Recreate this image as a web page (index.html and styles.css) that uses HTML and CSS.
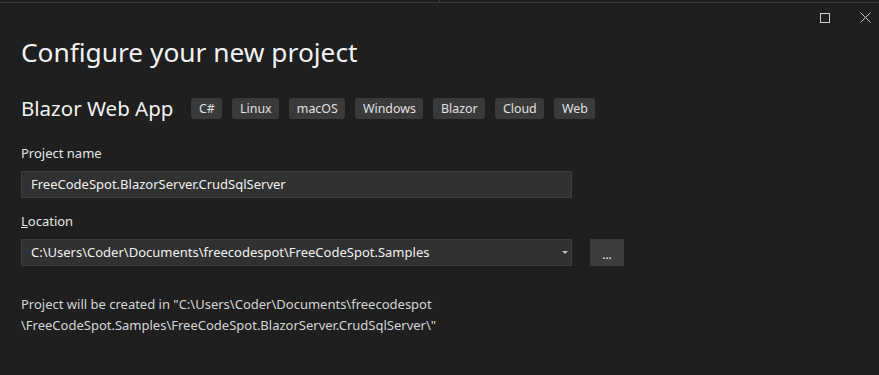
FILE: index.html
```html
<!DOCTYPE HTML>
<html>
<head>
    <meta charset="UTF-8">
    <title>Configure your new project</title>
    <link rel="stylesheet" href="styles.css">
</head>
<body>
    <div id="dialog">
        <div class="topline"><span class="split"></span></div>
        <div class="caption">
            <span class="btn-max"></span>
            <span class="btn-close">
                <svg width="11" height="11" viewBox="0 0 11 11"><path d="M0.5 0.5 L10.5 10.5 M10.5 0.5 L0.5 10.5" stroke="#c8c8c8" stroke-width="1" fill="none"/></svg>
            </span>
        </div>
        <h1 class="title">Configure your new project</h1>
        <div class="template">
            <h2 class="name">Blazor Web App</h2>
            <ul class="tags">
                <li>C#</li>
                <li>Linux</li>
                <li>macOS</li>
                <li>Windows</li>
                <li>Blazor</li>
                <li>Cloud</li>
                <li>Web</li>
            </ul>
        </div>
        <div class="field first">
            <label class="label">Project name</label>
            <div class="input">FreeCodeSpot.BlazorServer.CrudSqlServer</div>
        </div>
        <div class="field">
            <label class="label"><u>L</u>ocation</label>
            <div class="row">
                <div class="input combo">
                    <span>C:\Users\Coder\Documents\freecodespot\FreeCodeSpot.Samples</span>
                    <i class="arrow"></i>
                </div>
                <div class="browse">...</div>
            </div>
        </div>
        <p class="note">Project will be created in "C:\Users\Coder\Documents\freecodespot<br>\FreeCodeSpot.Samples\FreeCodeSpot.BlazorServer.CrudSqlServer\"</p>
    </div>
</body>
</html>
```

FILE: styles.css
```css
body{margin:0;background:#1f1f1f;font-family:"Noto Sans","Open Sans",sans-serif;color:#e6e6e6;}
h1,h2,p,ul,li{margin:0;padding:0;list-style:none;}

#dialog{
    position: relative;
    width: 879px;
    height: 375px;
    overflow: hidden;
}
.topline{
    height: 2px;
    border-bottom: 1px solid #3a3a3a;
    position: relative;
}
.topline .split{
    position: absolute;
    left: 439px;
    top: 0;
    width: 1px;
    height: 3px;
    background: #3a3a3a;
}
.caption{
    position: absolute;
    top: 12px;
    right: 8px;
    display: flex;
    align-items: center;
    gap: 30px;
}
.btn-max{
    width: 8px;
    height: 8px;
    border: 1px solid #d0d0d0;
}
.btn-close{
    display: flex;
}
.title{
    margin: 32px 0 0 21px;
    font-size: 26.3px;
    font-weight: normal;
    line-height: 34px;
    color: #f2f2f2;
}
.template{
    display: flex;
    align-items: center;
    margin: 26px 0 0 21px;
    height: 26px;
}
.name{
    font-size: 20.5px;
    font-weight: normal;
    line-height: 26px;
    color: #f2f2f2;
}
.tags{
    display: flex;
    gap: 10px;
    margin-left: 18px;
}
.tags li{
    height: 21px;
    line-height: 21px;
    padding: 0 7.6px;
    background: #3a3a3a;
    border-radius: 3px;
    font-size: 12.4px;
    color: #e0e0e0;
}
.field{
    margin: 14px 0 0 21px;
}
.field.first{
    margin-top: 23px;
}
.label{
    display: block;
    font-size: 13px;
    line-height: 18px;
    color: #e6e6e6;
}
.input{
    height: 25px;
    margin-top: 9px;
    padding-left: 9px;
    box-sizing: content-box;
    background: #313131;
    border: 1px solid #3d3d3d;
    font-size: 13px;
    line-height: 25px;
    color: #f0f0f0;
    width: 540px;
}
.row{
    display: flex;
    align-items: flex-end;
    gap: 18px;
}
.combo{
    display: flex;
    justify-content: space-between;
    align-items: center;
}
.arrow{
    width: 0;
    height: 0;
    margin-right: 3px;
    border-left: 3px solid transparent;
    border-right: 3px solid transparent;
    border-top: 3px solid #bdbdbd;
}
.browse{
    width: 34px;
    height: 27px;
    background: #3c3c3c;
    font-size: 12px;
    line-height: 32px;
    text-align: center;
    color: #f0f0f0;
}
.note{
    margin: 28px 0 0 21px;
    font-size: 13px;
    line-height: 21px;
    color: #d6d6d6;
}
```
